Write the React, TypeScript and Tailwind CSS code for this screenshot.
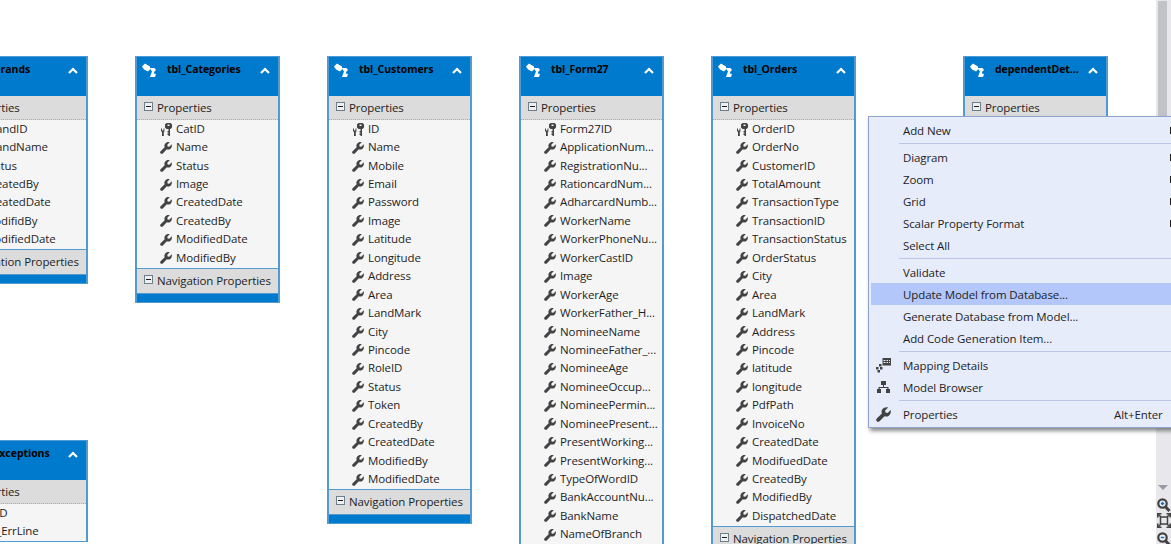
const entities = [
  {
    title: "tbl_Brands",
    pos: "left-[-57px] top-[56px]",
    rows: ["BrandID", "BrandName", "Status", "CreatedBy", "CreatedDate", "ModifidBy", "ModifiedDate"],
    nav: true,
  },
  {
    title: "tbl_Categories",
    pos: "left-[135px] top-[56px]",
    rows: ["CatID", "Name", "Status", "Image", "CreatedDate", "CreatedBy", "ModifiedDate", "ModifiedBy"],
    nav: true,
  },
  {
    title: "tbl_Customers",
    pos: "left-[327px] top-[56px]",
    rows: [
      "ID", "Name", "Mobile", "Email", "Password", "Image", "Latitude", "Longitude", "Address", "Area",
      "LandMark", "City", "Pincode", "RoleID", "Status", "Token", "CreatedBy", "CreatedDate", "ModifiedBy", "ModifiedDate",
    ],
    nav: true,
  },
  {
    title: "tbl_Form27",
    pos: "left-[519px] top-[56px]",
    rows: [
      "Form27ID", "ApplicationNum...", "RegistrationNu...", "RationcardNum...", "AdharcardNumb...", "WorkerName",
      "WorkerPhoneNu...", "WorkerCastID", "Image", "WorkerAge", "WorkerFather_H...", "NomineeName", "NomineeFather_...",
      "NomineeAge", "NomineeOccup...", "NomineePermin...", "NomineePresent...", "PresentWorking...", "PresentWorking...",
      "TypeOfWordID", "BankAccountNu...", "BankName", "NameOfBranch",
    ],
    nav: false,
  },
  {
    title: "tbl_Orders",
    pos: "left-[711px] top-[56px]",
    rows: [
      "OrderID", "OrderNo", "CustomerID", "TotalAmount", "TransactionType", "TransactionID", "TransactionStatus",
      "OrderStatus", "City", "Area", "LandMark", "Address", "Pincode", "latitude", "longitude", "PdfPath", "InvoiceNo",
      "CreatedDate", "ModifuedDate", "CreatedBy", "ModifiedBy", "DispatchedDate",
    ],
    nav: true,
  },
  {
    title: "dependentDet...",
    pos: "left-[963px] top-[56px]",
    rows: [],
    nav: false,
  },
  {
    title: "tbl_Exceptions",
    pos: "left-[-57px] top-[440px]",
    rows: ["ExID", "Ex_ErrLine"],
    nav: false,
  },
];

const menuGroups = [
  [{ label: "Add New", arrow: true }],
  [
    { label: "Diagram", arrow: true },
    { label: "Zoom", arrow: true },
    { label: "Grid", arrow: true },
    { label: "Scalar Property Format", arrow: true },
    { label: "Select All" },
  ],
  [
    { label: "Validate" },
    { label: "Update Model from Database...", active: true },
    { label: "Generate Database from Model..." },
    { label: "Add Code Generation Item..." },
  ],
  [
    { label: "Mapping Details", icon: "mapping" },
    { label: "Model Browser", icon: "browser" },
  ],
  [{ label: "Properties", icon: "wrench", shortcut: "Alt+Enter" }],
];

function Wrench({ size }: { size: number }) {
  return (
    <svg width={size} height={size} viewBox="0 0 12 12" fill="#424242" className="shrink-0">
      <path d="M11.700 2.300 9.300 4.700 7.600 4.400 7.300 2.700 9.700 .3C7.900-.2 6.100.4 5.100 1.700 4.300 2.800 4.200 4.100 4.700 5.200L.6 9.200C0 9.800 0 10.800.6 11.400 1.200 12 2.200 12 2.800 11.400L6.800 7.300C7.900 7.800 9.300 7.700 10.300 6.900 11.600 5.900 12.200 4.100 11.700 2.300Z" />
    </svg>
  );
}

function EntityIcon() {
  return (
    <svg width="15" height="15" viewBox="0 0 15 15" fill="white">
      <path d="M0 3.500 3 .5 8 3.500V6.500L6 8.500 2 6.500z" />
      <path d="M7.500 5h5l1.500 2-2 2v1.500l2 .5-1 3H8l1-3 1-2.500z" fillRule="evenodd" />
    </svg>
  );
}

function KeyIcon() {
  return (
    <svg width="11" height="13" viewBox="0 0 11 13" fill="#424242" className="shrink-0">
      <path d="M5.500 0h4L11 1.500v3L9.500 6H9v7H7.500v-1H6.500v-1.500h1v-1h-1V8h1V6h-2L4 4.500v-3zM6.500 1.500V3H8.500V1.500z" fillRule="evenodd" />
      <path d="M0 5.500h1V7.500h1.500V5.500h1V8.200L2.800 9v4H1V9L0 8.200z" />
    </svg>
  );
}

function MinusBox() {
  return (
    <div className="-mt-[3px] flex h-[9px] w-[9px] shrink-0 items-center justify-center border border-[#6d7f8c] bg-[#f0f0f0]">
      <div className="h-px w-[5px] bg-[#1e1e1e]" />
    </div>
  );
}

function Entity({ title, pos, rows, nav }: { title: string; pos: string; rows: string[]; nav: boolean }) {
  return (
    <div className={`absolute w-[145px] border-x-2 border-t border-b border-[#4f9bd2] bg-[#007acc] ${pos}`}>
      {/* Title */}
      <div className="flex h-[39px] items-start">
        <div className="ml-[5px] mt-[6px] w-[25px] shrink-0">
          <EntityIcon />
        </div>
        <span className="mt-[4px] flex-1 text-[10.5px] leading-[16px] font-bold tracking-[-0.05px] text-black">{title}</span>
        <svg width="10" height="7" viewBox="0 0 10 7" className="mr-[8px] mt-[10px] shrink-0" fill="none" stroke="white" strokeWidth="2.200">
          <path d="M1 6 5 2l4 4" />
        </svg>
      </div>

      {/* Properties */}
      <div className="flex h-[24px] items-center gap-[4px] border-b border-dotted border-[#a8a8a8] bg-[#dcdcdc] pl-[7px]">
        <MinusBox />
        <span className="text-[#1e1e1e]">Properties</span>
      </div>
      {rows.length > 0 && (
        <div className="bg-[#f5f5f5] pr-1">
          {rows.map((row, i) => (
            <div key={i} className="flex h-[18.45px] items-center">
              <div className="flex w-[39px] shrink-0 justify-end pr-[4px]">{i === 0 ? <KeyIcon /> : <Wrench size={12} />}</div>
              <span className="-mt-px whitespace-nowrap text-[#1e1e1e]">{row}</span>
            </div>
          ))}
        </div>
      )}

      {/* Navigation */}
      {nav && (
        <>
          <div className="flex h-[26px] items-center gap-[4px] border-y border-[#4f9bd2] bg-[#dcdcdc] pl-[7px]">
            <MinusBox />
            <span className="whitespace-nowrap text-[#1e1e1e]">Navigation Properties</span>
          </div>
          <div className="h-[8px]" />
        </>
      )}
    </div>
  );
}

function MenuIcon({ name }: { name?: string }) {
  if (name === "mapping")
    return (
      <svg width="15" height="15" viewBox="0 0 15 15" fill="#424242">
        <path d="M6.500 0H15V7.500H6.500zM7.500 2V3H9.500V2zM10.500 2V3H12V2zM13 2V3H14V2zM7.500 4V5H9.500V4zM10.500 4V5H12V4zM13 4V5H14V4z" fillRule="evenodd" />
        <path d="M3 6H5.500V8.500H3zM0 9H2.500V11.500H0zM4 9H6.500V11.500H4zM1.500 12H4V14.500H1.500z" />
      </svg>
    );
  if (name === "browser")
    return (
      <svg width="13" height="12" viewBox="0 0 13 12" fill="#424242" className="ml-px">
        <path d="M4 0H9V4H7V6H11.500V8H13V12H9V8H10.300V7H2.700V8H4V12H0V8H1.500V6H6V4H4z" />
      </svg>
    );
  if (name === "wrench") return <Wrench size={15} />;
  return null;
}

function ContextMenu() {
  return (
    <div className="absolute left-[868px] top-[116px] w-[340px] border border-[#8ea3d2] bg-[#e7ecfb] py-[2px] pl-[2px] text-[#1e1e1e] shadow-[2px_3px_4px_rgba(0,0,0,0.45)]">
      {menuGroups.map((group, g) => (
        <div key={g}>
          {g > 0 && (
            <div className="flex h-[5px] items-center pl-[28px]">
              <div className="h-px flex-1 bg-[#bcc7e6]" />
            </div>
          )}
          {group.map((item: { label: string; icon?: string; active?: boolean; arrow?: boolean; shortcut?: string }) => (
            <div key={item.label} className={`flex h-[22px] items-center ${item.active ? "bg-[#b3c7fa]" : ""}`}>
              <div className="flex w-[32px] shrink-0 pl-[5px]">
                <MenuIcon name={item.icon} />
              </div>
              <span className="whitespace-nowrap pt-px">{item.label}</span>
              {item.shortcut && <span className="absolute left-[245px] whitespace-nowrap pt-px">{item.shortcut}</span>}
              {item.arrow && <div className="absolute left-[301px] h-[7px] w-[4px] bg-[#1e1e1e]" />}
            </div>
          ))}
        </div>
      ))}
    </div>
  );
}

function Magnifier({ sign }: { sign: "plus" | "minus" }) {
  return (
    <svg width="14" height="14" viewBox="0 0 14 14" className="shrink-0">
      <circle cx="5.500" cy="5.500" r="4.200" fill="#f0f0f0" stroke="#424242" strokeWidth="2.200" />
      <path d="M8.500 8.800 12.500 13" stroke="#424242" strokeWidth="3" />
      <path d="M3.800 5.500H7.200" stroke="#1b6fc2" strokeWidth="1.500" />
      {sign === "plus" && <path d="M5.500 3.800V7.200" stroke="#1b6fc2" strokeWidth="1.500" />}
    </svg>
  );
}

function Scrollbar() {
  return (
    <div className="flex w-[15px] shrink-0 flex-col items-center bg-[#e8e8ec]">
      <div className="ml-[-2px] mt-px h-[420px] w-[9px] shrink-0 bg-[#c2c3c9]" />
      <svg width="10" height="5" viewBox="0 0 10 5" className="ml-[-2px] mt-[64px] shrink-0" fill="#9a9aa4">
        <path d="M0 0h10L5 5z" />
      </svg>
      <div className="mt-[8px] flex w-[15px] flex-col pl-[1px]">
        <Magnifier sign="plus" />
        <svg width="14" height="15" viewBox="0 0 14 15" fill="none" stroke="#424242" className="mt-px shrink-0">
          <rect x="3.500" y="4" width="7" height="7" strokeWidth="1.500" />
          <path d="M0.700 4.500V.7H4.500M9.500 .7H13.300V4.500M13.300 10.500V14.300H9.500M4.500 14.300H.7V10.500" strokeWidth="1.800" />
          <path d="M1 1l3 3M13 1l-3 3M13 14l-3-3M1 14l3-3" strokeWidth="1.500" />
        </svg>
        <div className="mt-[4px]">
          <Magnifier sign="minus" />
        </div>
      </div>
    </div>
  );
}

export default function App() {
  return (
    <div className="relative flex h-[544px] w-[1171px] overflow-hidden bg-white font-['Open_Sans','Noto_Sans',sans-serif] text-[11.5px] leading-[18px] tracking-[-0.1px]">
      <div className="relative flex-1">
        {entities.map((entity) => (
          <Entity key={entity.title} {...entity} />
        ))}
      </div>
      <Scrollbar />
      <ContextMenu />
    </div>
  );
}
